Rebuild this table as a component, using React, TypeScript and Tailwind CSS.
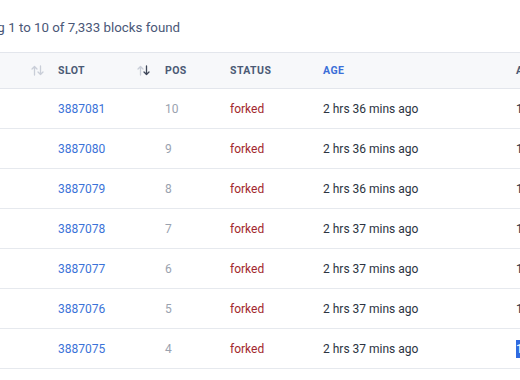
const rows = [
  { slot: "3887081", pos: "10", age: "2 hrs 36 mins ago" },
  { slot: "3887080", pos: "9", age: "2 hrs 36 mins ago" },
  { slot: "3887079", pos: "8", age: "2 hrs 36 mins ago" },
  { slot: "3887078", pos: "7", age: "2 hrs 37 mins ago" },
  { slot: "3887077", pos: "6", age: "2 hrs 37 mins ago" },
  { slot: "3887076", pos: "5", age: "2 hrs 37 mins ago" },
  { slot: "3887075", pos: "4", age: "2 hrs 37 mins ago" },
];

const SortIcon = ({ down = false }: { down?: boolean }) => (
  <svg width="13" height="11" viewBox="0 0 13 11" fill="none" strokeLinecap="round" strokeLinejoin="round">
    <g stroke="#c9ced8" strokeWidth="1.3">
      <path d="M3.5 10V1.5M1 4l2.5-2.5L6 4" />
    </g>
    <g stroke={down ? "#3d4658" : "#c9ced8"} strokeWidth="1.3">
      <path d="M9.5 1v8.5M7 7l2.5 2.5L12 7" />
    </g>
  </svg>
);

const cols = "grid grid-cols-[50px_107px_65px_93px_193px_40px]";

const App = () => {
  return (
    <div className="w-[520px] h-[380px] overflow-hidden bg-white font-['Roboto',sans-serif]">
      <div className="h-[52px] flex items-center pt-[3px]">
        <p className="ml-[-46px] text-[13.3px] text-[#4a5877] whitespace-nowrap">Showing 1 to 10 of 7,333 blocks found</p>
      </div>
      <div className="w-[560px]">
        <div className={`${cols} h-[37px] items-center bg-[#f7f8fa] border-y border-[#e3e6ec] text-[10.5px] font-bold tracking-[0.04em] uppercase text-[#4b5a75]`}>
          <div className="flex justify-end pr-[6px]"><SortIcon /></div>
          <div className="flex items-center justify-between pl-2 pr-[7px]">
            <span>Slot</span>
            <SortIcon down />
          </div>
          <div className="pl-2">Pos</div>
          <div className="pl-2">Status</div>
          <div className="pl-2 text-[#3b6fd8]">Age</div>
          <div className="pl-2">Age</div>
        </div>
        {rows.map((r, i) => (
          <div key={r.slot} className={`${cols} h-[40px] items-center border-b border-[#e6e9ee] text-[12px] pt-[1px]`}>
            <div />
            <div className="pl-2 text-[#3a72d8]">{r.slot}</div>
            <div className="pl-2 text-[#9aa2af]">{r.pos}</div>
            <div className="pl-2 text-[#a2272d]">forked</div>
            <div className="pl-2 text-[#2b3341]">{r.age}</div>
            <div className="pl-2 text-[#2b3341]">
              {i === rows.length - 1 ? (
                <span className="inline-block h-[18px] leading-[18px] bg-[#2f6ae0] text-white">1</span>
              ) : (
                "1"
              )}
            </div>
          </div>
        ))}
      </div>
    </div>
  );
};

export default App;
